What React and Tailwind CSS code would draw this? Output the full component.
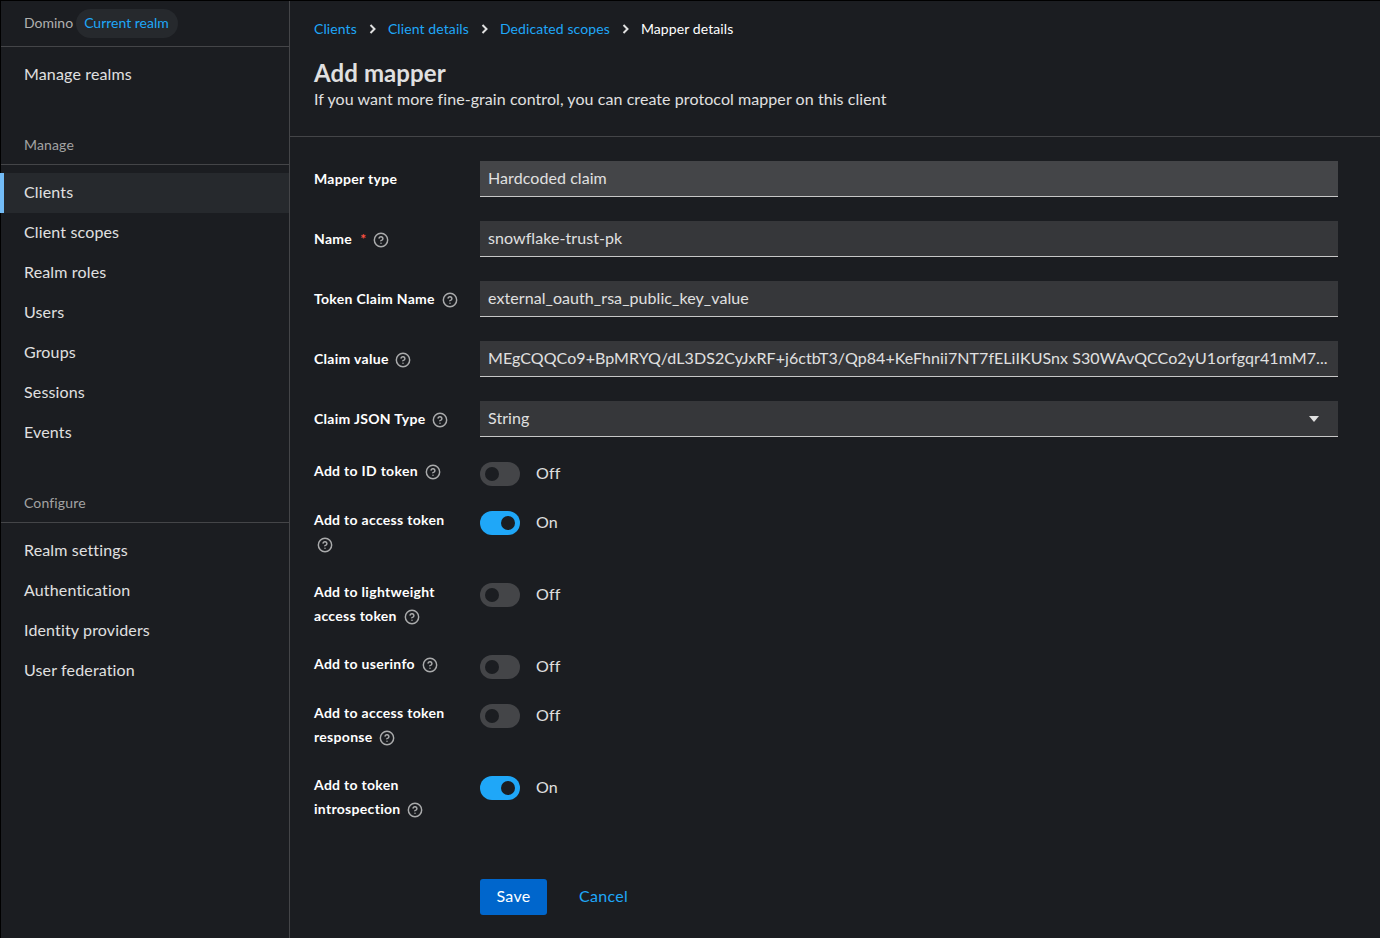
import React from 'react';
import { CircleHelp } from 'lucide-react';

const manageItems = ['Clients', 'Client scopes', 'Realm roles', 'Users', 'Groups', 'Sessions', 'Events'];
const configureItems = ['Realm settings', 'Authentication', 'Identity providers', 'User federation'];

const claimValue = 'MEgCQQCo9+BpMRYQ/dL3DS2CyJxRF+j6ctbT3/Qp84+KeFhnii7NT7fELiIKUSnx S30WAvQCCo2yU1orfgqr41mM7...';

const Help = () => (
  <CircleHelp size={16} strokeWidth={2.2} className="inline-block ml-[3px] align-[-4px] text-[#aaabac]" />
);

const NavItem = ({ label, active }) => (
  <div className={`h-10 pb-[2px] flex items-center text-[16px] tracking-[0.15px] text-[#e0e0e0] ${active ? 'bg-[#26292d] border-l-4 border-[#73bcf7] -ml-px pl-[20px]' : 'pl-[23px]'}`}>
    {label}
  </div>
);

const Sidebar = () => (
  <aside className="w-[289px] shrink-0 border-r border-[#444548]">
    <div className="h-[45px] border-b border-[#444548] flex items-center pl-[23px] box-content">
      <span className="pb-[2px] text-[14px] text-[#b0b0b0]">Domino</span>
      <span className="ml-[3px] h-[29px] pl-2 pr-[9px] pb-[2px] rounded-full bg-[#26292d] flex items-center text-[14px] text-[#1fa7f8]">Current realm</span>
    </div>
    <div className="h-[53px] flex items-center pl-[23px] text-[16px] tracking-[0.15px] text-[#e0e0e0]">Manage realms</div>
    <div className="h-[65px] pt-[35px] pl-[23px] text-[14px] leading-[20px] tracking-[0.15px] text-[#a3a3a3] border-b border-[#444548]">Manage</div>
    <nav className="pt-2">
      {manageItems.map((item) => (
        <NavItem key={item} label={item} active={item === 'Clients'} />
      ))}
    </nav>
    <div className="h-[70px] pt-[40px] pl-[23px] text-[14px] leading-[20px] tracking-[0.15px] text-[#a3a3a3] border-b border-[#444548]">Configure</div>
    <nav className="pt-2">
      {configureItems.map((item) => (
        <NavItem key={item} label={item} />
      ))}
    </nav>
  </aside>
);

const Crumb = ({ label, last }) =>
  last ? (
    <span className="text-[14px] tracking-[0.1px] text-white">{label}</span>
  ) : (
    <>
      <span className="text-[14px] tracking-[0.1px] text-[#1fa7f8]">{label}</span>
      <svg width="7" height="10" viewBox="0 0 7 10" className="mx-3 mt-[2px]">
        <path d="M1.5 1 L5.5 5 L1.5 9" fill="none" stroke="#e0e0e0" strokeWidth="2" />
      </svg>
    </>
  );

const Field = ({ label, required, help, value, disabled, select }) => (
  <div className="flex items-center">
    <div className="w-[166px] shrink-0 pb-[2px] text-[14px] font-bold tracking-[0.3px] text-white">
      {label}
      {required && <span className="ml-2 text-[#fe5142]">*</span>} {help && <Help />}
    </div>
    <div className={`flex-1 min-w-0 h-9 pl-2 pr-2 pb-[2px] flex items-center text-[16px] tracking-[0.07px] text-[#e0e0e0] border-b border-[#c7c7c7] ${disabled ? 'bg-[#444548]' : 'bg-[#36373a]'}`}>
      <span className="flex-1 min-w-0 whitespace-nowrap">{value}</span>
      {select && (
        <svg width="10" height="6" viewBox="0 0 10 6" className="mr-[11px] ml-2 mt-[2px] shrink-0">
          <path d="M0 0 H10 L5 6 Z" fill="#e0e0e0" />
        </svg>
      )}
    </div>
  </div>
);

const Toggle = ({ label, on }) => (
  <div className="flex items-start">
    <div className="w-[166px] shrink-0 pr-[16px] -mt-[2px] pb-[2px] text-[14px] leading-[24px] font-bold tracking-[0.3px] text-white">
      {label} <Help />
    </div>
    <div className="mt-px flex items-start">
      <div className={`w-10 h-6 rounded-full flex items-center px-[5px] ${on ? 'bg-[#1fa7f8] justify-end' : 'bg-[#444548]'}`}>
        <div className="w-[14px] h-[14px] rounded-full bg-[#1b1d21]" />
      </div>
      <span className="ml-4 text-[16px] leading-[22px] tracking-[0.2px] text-[#e0e0e0]">{on ? 'On' : 'Off'}</span>
    </div>
  </div>
);

export default function App() {
  return (
    <div className="h-[938px] w-[1380px] flex bg-[#1b1d21] border-t border-l border-[#000000]" style={{ fontFamily: 'Lato, sans-serif' }}>
      <Sidebar />
      <main className="flex-1 min-w-0">
        <header className="h-[135px] border-b border-[#444548] px-6 box-content">
          <div className="pt-4 flex items-center h-[38px]">
            <Crumb label="Clients" />
            <Crumb label="Client details" />
            <Crumb label="Dedicated scopes" />
            <Crumb label="Mapper details" last />
          </div>
          <h1 className="mt-[19px] text-[24px] leading-[29px] font-bold tracking-[0.1px] text-[#e0e0e0]">Add mapper</h1>
          <p className="text-[16px] leading-[24px] tracking-[0.07px] text-[#e0e0e0]">If you want more fine-grain control, you can create protocol mapper on this client</p>
        </header>
        <form className="pt-6 pl-6 pr-[42px] flex flex-col gap-6">
          <Field label="Mapper type" value="Hardcoded claim" disabled />
          <Field label="Name" required help value="snowflake-trust-pk" />
          <Field label="Token Claim Name" help value="external_oauth_rsa_public_key_value" />
          <Field label="Claim value" help value={claimValue} />
          <Field label="Claim JSON Type" help value="String" select />
          <Toggle label="Add to ID token" />
          <Toggle label="Add to access token" on />
          <Toggle label="Add to lightweight access token" />
          <Toggle label="Add to userinfo" />
          <Toggle label="Add to access token response" />
          <Toggle label="Add to token introspection" on />
          <div className="mt-8 ml-[166px] flex items-center">
            <button type="button" className="h-9 w-[67px] pb-[2px] rounded-[3px] bg-[#0066cc] text-[16px] tracking-[0.3px] text-white">Save</button>
            <button type="button" className="ml-8 pb-[2px] text-[16px] tracking-[0.3px] text-[#1fa7f8]">Cancel</button>
          </div>
        </form>
      </main>
    </div>
  );
}
